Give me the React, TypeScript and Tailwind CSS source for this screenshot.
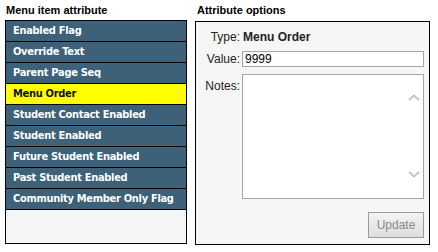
import React from 'react';

const items = [
  'Enabled Flag',
  'Override Text',
  'Parent Page Seq',
  'Menu Order',
  'Student Contact Enabled',
  'Student Enabled',
  'Future Student Enabled',
  'Past Student Enabled',
  'Community Member Only Flag',
];

const selected = 'Menu Order';

const App: React.FC = () => {
  return (
    <div className="w-[438px] h-[252px] bg-white flex gap-[8px] pl-[5px] pt-[3px] font-['Liberation_Sans',Arial,sans-serif] text-[12px] text-[#222]">
      {/* left column: attribute list */}
      <div className="w-[182px] flex flex-col">
        <h3 className="h-[17px] pl-[1px] font-bold text-[11px] leading-[14px] text-black">Menu item attribute</h3>
        <ul className="h-[224px] border border-black bg-[#f5f5f5]">
          {items.map(item => (
            <li
              key={item}
              className={`h-[21px] border-b border-black pl-[7px] leading-[20px] whitespace-nowrap overflow-hidden text-[11px] font-bold tracking-[-0.3px] font-['DejaVu_Sans_Condensed','DejaVu_Sans',sans-serif] ${
                item === selected ? 'bg-[#ffff00] text-[#111]' : 'bg-[#3c6178] text-white'
              }`}
            >
              {item}
            </li>
          ))}
        </ul>
      </div>

      {/* right column: options */}
      <div className="w-[235px] flex flex-col">
        <h3 className="h-[18px] pl-[2px] font-bold text-[11px] leading-[14px] text-black">Attribute options</h3>
        <div className="h-[224px] border border-black bg-[#f6f6f6] flex flex-col pr-[5px]">
          <div className="grid grid-cols-[44px_1fr] gap-x-[3px] mt-[7px]">
            <span className="text-right leading-[16px]">Type:</span>
            <span className="font-bold leading-[16px]">Menu Order</span>
          </div>
          <div className="grid grid-cols-[44px_1fr] gap-x-[2px] mt-[6px] items-center">
            <span className="text-right leading-[16px]">Value:</span>
            <input
              readOnly
              value="9999"
              className="h-[16px] border border-[#a5a5a5] bg-white px-[2px] text-[12px] leading-[14px] text-black outline-none"
            />
          </div>
          <div className="grid grid-cols-[44px_1fr] gap-x-[2px] mt-[7px]">
            <span className="text-right leading-[16px] mt-[4px]">Notes:</span>
            <div className="relative h-[125px] border border-[#a5a5a5] bg-white">
              <svg className="absolute right-[3px] top-[19px]" width="12" height="7" viewBox="0 0 12 7" fill="none">
                <path d="M1 6L6 1.5L11 6" stroke="#c4c4c4" strokeWidth="2" />
              </svg>
              <svg className="absolute right-[3px] bottom-[20px]" width="12" height="7" viewBox="0 0 12 7" fill="none">
                <path d="M1 1L6 5.5L11 1" stroke="#c4c4c4" strokeWidth="2" />
              </svg>
            </div>
          </div>
          <div className="flex justify-end mt-[13px]">
            <button className="w-[56px] h-[26px] border border-[#9a9a9a] bg-gradient-to-b from-[#f4f4f4] to-[#dedede] text-[12px] text-[#8a8a8a]">
              Update
            </button>
          </div>
        </div>
      </div>
    </div>
  );
};

export default App;
